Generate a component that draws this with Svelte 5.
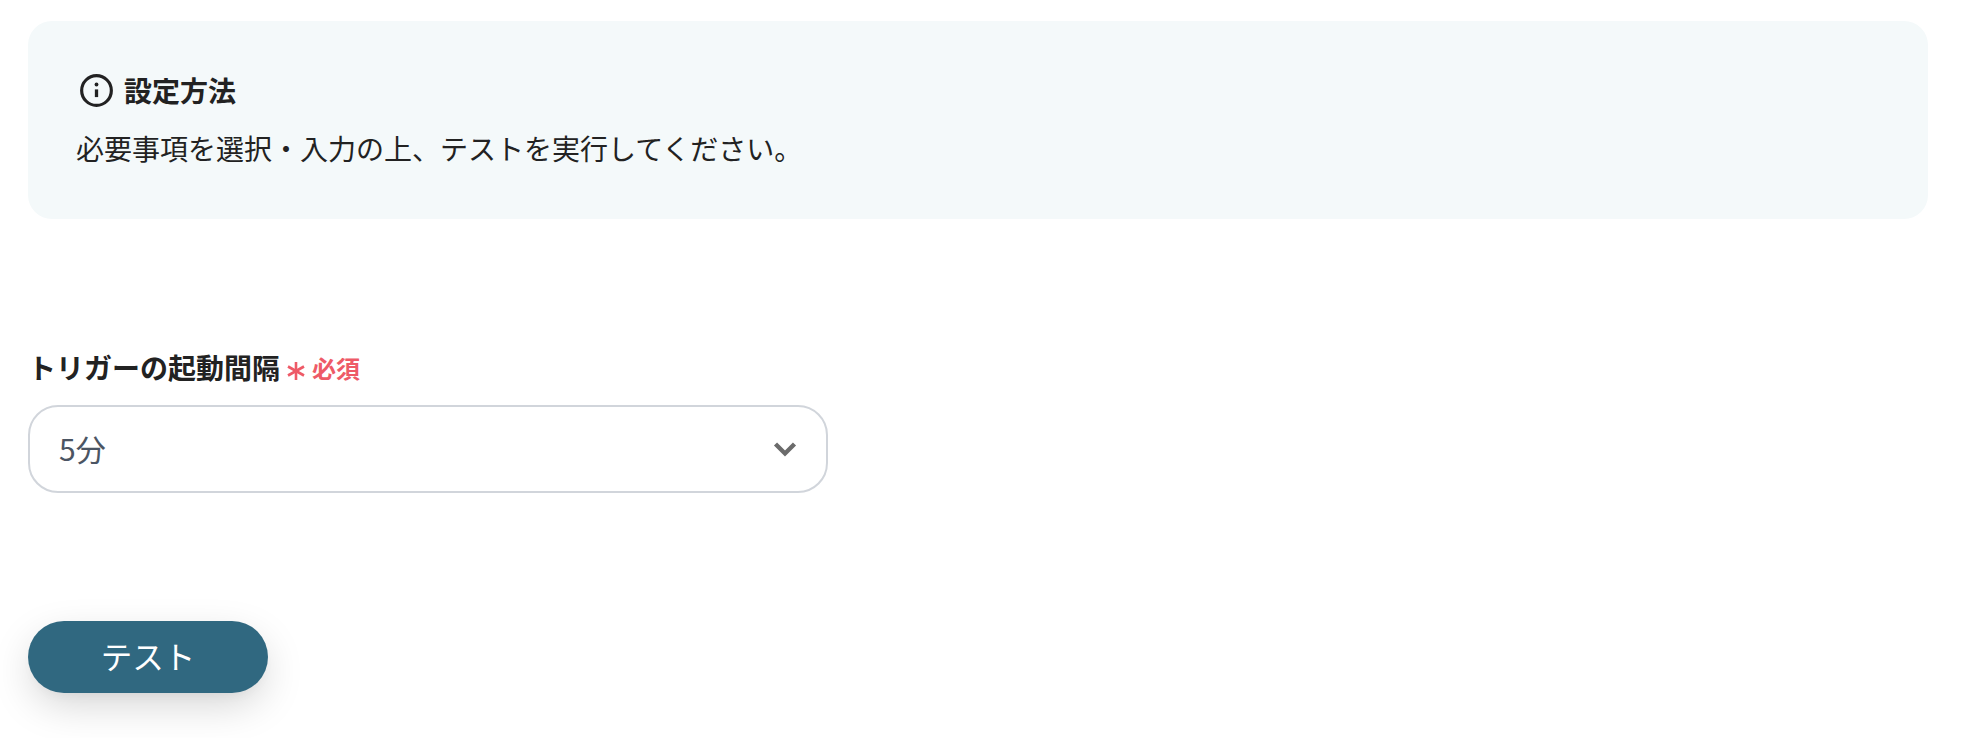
<script lang="ts">
	let interval = '5分';
</script>

<div class="page">
	<section class="notice">
		<h2 class="notice-title">
			<svg viewBox="0 0 24 24" fill="none" stroke="currentColor" stroke-width="2.3" aria-hidden="true">
				<circle cx="12" cy="12" r="10.8" />
				<line x1="12" y1="11.2" x2="12" y2="16.8" stroke-width="2.4" />
				<circle cx="12" cy="7.6" r="1.4" fill="currentColor" stroke="none" />
			</svg>
			<span>設定方法</span>
		</h2>
		<p>必要事項を選択・入力の上、テストを実行してください。</p>
	</section>

	<div class="field">
		<div class="label">
			<span class="label-text">トリガーの起動間隔</span>
			<span class="required">
				<svg viewBox="0 0 18 18" fill="none" stroke="currentColor" stroke-width="2.6" aria-hidden="true">
					<line x1="9" y1="0" x2="9" y2="18" />
					<line x1="1" y1="4.5" x2="17" y2="13.5" />
					<line x1="17" y1="4.5" x2="1" y2="13.5" />
				</svg>
				必須
			</span>
		</div>
		<div class="select">
			<span>{interval}</span>
			<svg viewBox="0 0 24 24" fill="none" stroke="currentColor" stroke-width="4.4" aria-hidden="true">
				<polyline points="2.5,6 12,15.5 21.5,6" />
			</svg>
		</div>
	</div>

	<button class="test" type="button">テスト</button>
</div>

<style>
	:global(body) {
		background: #fff;
	}

	.page {
		padding: 21px 34px 45px 28px;
		font-family: 'Noto Sans CJK JP', 'Noto Sans', sans-serif;
		color: #222;
	}

	.notice {
		height: 198px;
		box-sizing: border-box;
		padding: 53px 48px 0;
		background: #f4f9fa;
		border-radius: 24px;
	}

	.notice-title {
		display: flex;
		align-items: center;
		gap: 11px;
		margin: 0;
		padding-left: 4px;
		font-size: 28px;
		font-weight: 700;
		line-height: 33px;
	}

	.notice-title svg {
		width: 33px;
		height: 33px;
	}

	.notice p {
		margin: 21px 0 0;
		font-size: 28px;
		line-height: 40px;
	}

	.field {
		width: 800px;
		margin-top: 128px;
	}

	.label {
		display: flex;
		align-items: center;
		height: 40px;
		font-size: 28px;
		font-weight: 700;
	}

	.required {
		display: flex;
		align-items: center;
		gap: 7px;
		margin-left: 7px;
		color: #ee5a67;
		font-size: 24px;
	}

	.required svg {
		width: 18px;
		height: 18px;
		margin-top: 7px;
	}

	.select {
		display: flex;
		align-items: center;
		justify-content: space-between;
		height: 88px;
		box-sizing: border-box;
		margin-top: 18px;
		padding: 0 29px 0 29px;
		border: 2px solid #d1d5db;
		border-radius: 30px;
		color: #4b5563;
		font-size: 30px;
	}

	.select span {
		margin-bottom: 3px;
	}

	.select svg {
		width: 24px;
		height: 24px;
		color: #6b6b6b;
		margin-top: 2px;
	}

	.test {
		display: block;
		width: 240px;
		height: 72px;
		margin-top: 128px;
		padding-bottom: 5px;
		border: none;
		border-radius: 36px;
		background: #306880;
		color: #fff;
		font-family: inherit;
		font-size: 31.5px;
		box-shadow: 0 14px 42px -4px rgba(0, 0, 0, 0.18), 0 6px 14px -6px rgba(0, 0, 0, 0.05);
		cursor: pointer;
	}
</style>
